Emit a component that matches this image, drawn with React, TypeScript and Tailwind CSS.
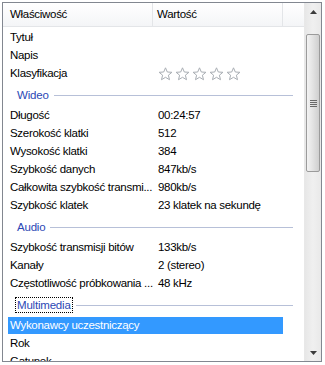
import React from "react";

const font = { fontFamily: '"Liberation Sans", Arial, sans-serif' };

function Star() {
  return (
    <svg width="15" height="14" viewBox="0 0 15 14" className="mr-[2px]">
      <path
        d="M7.5 0.8 L9.3 5.0 L13.9 5.3 L10.4 8.2 L11.5 12.7 L7.5 10.3 L3.5 12.7 L4.6 8.2 L1.1 5.3 L5.7 5.0 Z"
        fill="#ffffff"
        stroke="#a8adb3"
        strokeWidth="1"
        strokeLinejoin="round"
      />
    </svg>
  );
}

function Row({ name, value, children }: { name: string; value?: string; children?: React.ReactNode }) {
  return (
    <div className="flex h-[18px] items-center text-[11.5px] tracking-[-0.3px] text-black">
      <div className="w-[155px] shrink-0 pl-[7px] whitespace-nowrap overflow-hidden">{name}</div>
      <div className="flex items-center whitespace-nowrap">{children ?? value}</div>
    </div>
  );
}

function Group({ title, focus }: { title: string; focus?: boolean }) {
  return (
    <div className="flex h-[24px] items-center pl-[12px] pr-[11px]">
      <span
        className={
          "text-[11.5px] tracking-[-0.2px] text-[#2c48b5] leading-[14px] px-[1px] " +
          (focus ? "border border-dotted border-black" : "border border-transparent")
        }
      >
        {title}
      </span>
      <div className="ml-[3px] flex-1 h-px bg-[#b7c0d8]" />
    </div>
  );
}

export default function App() {
  return (
    <div className="w-[325px] h-[365px] bg-white p-[2px]" style={font}>
      <div className="w-[320px] h-[360px] border border-[#828790] flex overflow-hidden bg-white">
        <div className="flex-1 flex flex-col overflow-hidden">
          <div className="h-[24px] shrink-0 flex bg-gradient-to-b from-white to-[#f4f5f7] border-b border-[#e3e5e8] text-[11.5px] tracking-[-0.3px] text-black">
            <div className="w-[150px] border-r border-[#e3e5e8] pl-[7px] flex items-center">Właściwość</div>
            <div className="w-[130px] border-r border-[#e3e5e8] pl-[4px] flex items-center">Wartość</div>
            <div className="flex-1" />
          </div>
          <div className="pt-[2px]">
            <Row name="Tytuł" />
            <Row name="Napis" />
            <Row name="Klasyfikacja">
              <Star />
              <Star />
              <Star />
              <Star />
              <Star />
            </Row>
            <Group title="Wideo" />
            <Row name="Długość" value="00:24:57" />
            <Row name="Szerokość klatki" value="512" />
            <Row name="Wysokość klatki" value="384" />
            <Row name="Szybkość danych" value="847kb/s" />
            <Row name="Całkowita szybkość transmi..." value="980kb/s" />
            <Row name="Szybkość klatek" value="23 klatek na sekundę" />
            <Group title="Audio" />
            <Row name="Szybkość transmisji bitów" value="133kb/s" />
            <Row name="Kanały" value="2 (stereo)" />
            <Row name="Częstotliwość próbkowania ..." value="48 kHz" />
            <Group title="Multimedia" focus />
            <div className="ml-[5px] w-[275px] h-[17px] bg-[#3399ff] text-white text-[11.5px] tracking-[-0.3px] flex items-center pl-[2px] mb-px whitespace-nowrap">
              Wykonawcy uczestniczący
            </div>
            <Row name="Rok" />
            <Row name="Gatunek" />
          </div>
        </div>
        <div className="w-[17px] shrink-0 flex flex-col bg-gradient-to-r from-[#e7e7e7] via-[#f0f0f0] to-[#e9e9e9] border-l border-[#e8e8e8]">
          <div className="h-[17px] flex items-center justify-center">
            <svg width="7" height="4" viewBox="0 0 7 4">
              <path d="M3.5 0 L7 4 L0 4 Z" fill="#3c3c3c" />
            </svg>
          </div>
          <div className="mt-[14px] mx-px h-[138px] rounded-[2px] border border-[#9b9b9b] bg-gradient-to-r from-[#f3f3f3] via-[#e2e2e2] to-[#cfcfcf] flex items-center justify-center">
            <div className="flex flex-col gap-[1px]">
              <div className="w-[7px] h-px bg-[#6a6a6a]" />
              <div className="w-[7px] h-px bg-[#6a6a6a]" />
              <div className="w-[7px] h-px bg-[#6a6a6a]" />
              <div className="w-[7px] h-px bg-[#6a6a6a]" />
            </div>
          </div>
          <div className="flex-1" />
          <div className="h-[17px] flex items-center justify-center">
            <svg width="7" height="4" viewBox="0 0 7 4">
              <path d="M0 0 L7 0 L3.5 4 Z" fill="#3c3c3c" />
            </svg>
          </div>
        </div>
      </div>
    </div>
  );
}
